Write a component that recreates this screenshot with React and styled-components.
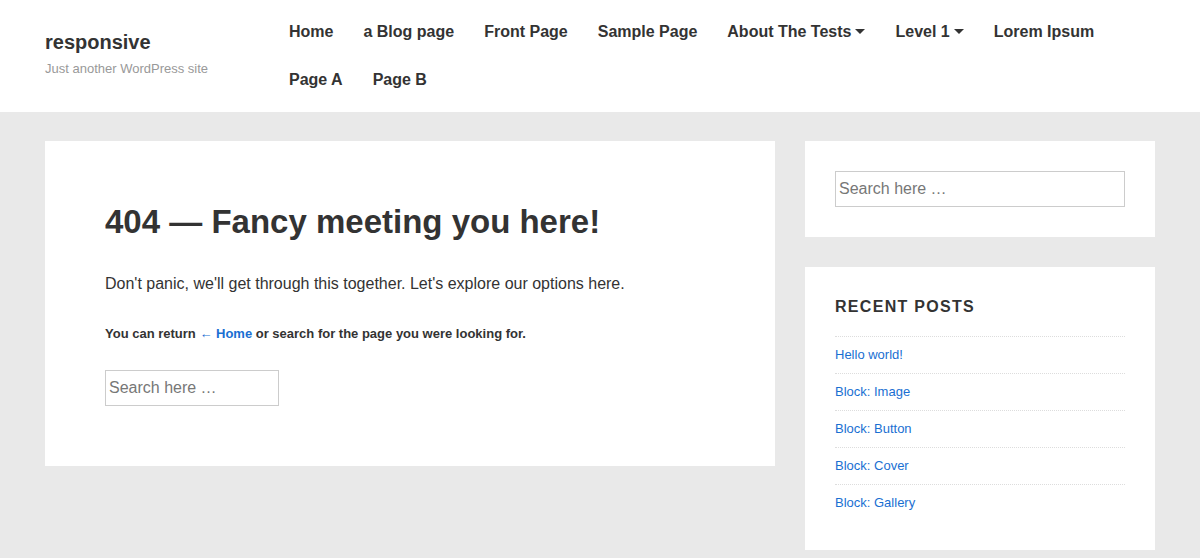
import React from "react";
import styled, { createGlobalStyle } from "styled-components";

const Global = createGlobalStyle`
  * { box-sizing: border-box; }
  body {
    margin: 0;
    background: #e9e9e9;
    font-family: "Liberation Sans", Arial, sans-serif;
    color: #333;
  }
`;

const Header = styled.header`
  background: #fff;
  height: 112px;
`;

const Container = styled.div`
  width: 1110px;
  margin: 0 auto;
  display: flex;
`;

const Branding = styled.div`
  width: 229px;
  flex: none;
  padding-top: 30px;
`;

const SiteTitle = styled.div`
  font-size: 20px;
  line-height: 24px;
  font-weight: 700;
  color: #333;
`;

const Tagline = styled.div`
  margin-top: 6px;
  font-size: 13px;
  line-height: 18px;
  color: #999;
`;

const Nav = styled.nav`
  flex: 1;
  display: flex;
  flex-wrap: wrap;
  padding-top: 8px;
`;

const NavItem = styled.a`
  display: flex;
  align-items: center;
  gap: 4px;
  padding: 0 15px;
  height: 48px;
  font-size: 16px;
  font-weight: 700;
  color: #333;
  text-decoration: none;
`;

const Caret = styled.span`
  width: 0;
  height: 0;
  border-left: 5px solid transparent;
  border-right: 5px solid transparent;
  border-top: 5px solid #333;
  margin-top: -2px;
`;

const Main = styled(Container)`
  padding-top: 29px;
  gap: 30px;
  align-items: flex-start;
`;

const Card = styled.section`
  background: #fff;
  padding: ${(p) => p.$pad || "30px"};
`;

const Content = styled(Card)`
  width: 730px;
  flex: none;
`;

const Sidebar = styled.aside`
  width: 350px;
  display: flex;
  flex-direction: column;
  gap: 30px;
`;

const Title = styled.h1`
  margin: 0;
  font-size: 33px;
  line-height: 40px;
  font-weight: 700;
  color: #333;
`;

const Lead = styled.p`
  margin: 30px 0 0;
  font-size: 16px;
  line-height: 24px;
`;

const Small = styled.p`
  margin: 28px 0 0;
  font-size: 13px;
  line-height: 20px;
  font-weight: 700;
`;

const Link = styled.a`
  color: #1a6fd2;
  text-decoration: none;
`;

const SearchInput = styled.input`
  display: block;
  width: ${(p) => p.$w};
  height: 36px;
  margin-top: ${(p) => p.$mt || "0"};
  border: 1px solid #cccccc;
  padding: 0 3px;
  font-family: "Liberation Sans", Arial, sans-serif;
  font-size: 16px;
  color: #333;
  outline: none;
  &::placeholder { color: #777; }
`;

const WidgetTitle = styled.h3`
  margin: 0 0 20px;
  font-size: 16px;
  line-height: 18px;
  font-weight: 700;
  letter-spacing: 1.3px;
  text-transform: uppercase;
  color: #333;
`;

const List = styled.ul`
  list-style: none;
  margin: 0;
  padding: 0;
`;

const ListItem = styled.li`
  border-top: 1px dotted #dddddd;
  padding: 9px 0 10px;
  font-size: 13px;
  line-height: 17px;
`;

const navItems = [
  { label: "Home" },
  { label: "a Blog page" },
  { label: "Front Page" },
  { label: "Sample Page" },
  { label: "About The Tests", sub: true },
  { label: "Level 1", sub: true },
  { label: "Lorem Ipsum" },
  { label: "Page A" },
  { label: "Page B" },
];

const posts = ["Hello world!", "Block: Image", "Block: Button", "Block: Cover", "Block: Gallery"];

export default function App() {
  return (
    <>
      <Global />
      <Header>
        <Container>
          <Branding>
            <SiteTitle>responsive</SiteTitle>
            <Tagline>Just another WordPress site</Tagline>
          </Branding>
          <Nav>
            {navItems.map((n) => (
              <NavItem key={n.label} href="#">
                {n.label}
                {n.sub && <Caret />}
              </NavItem>
            ))}
          </Nav>
        </Container>
      </Header>
      <Main>
        <Content $pad="61px 60px 60px">
          <Title>404 — Fancy meeting you here!</Title>
          <Lead>Don't panic, we'll get through this together. Let's explore our options here.</Lead>
          <Small>
            You can return <Link href="#">← Home</Link> or search for the page you were looking for.
          </Small>
          <SearchInput $w="174px" $mt="26px" placeholder="Search here …" />
        </Content>
        <Sidebar>
          <Card>
            <SearchInput $w="290px" placeholder="Search here …" />
          </Card>
          <Card $pad="31px 30px 29px">
            <WidgetTitle>Recent Posts</WidgetTitle>
            <List>
              {posts.map((p) => (
                <ListItem key={p}>
                  <Link href="#">{p}</Link>
                </ListItem>
              ))}
            </List>
          </Card>
        </Sidebar>
      </Main>
    </>
  );
}
